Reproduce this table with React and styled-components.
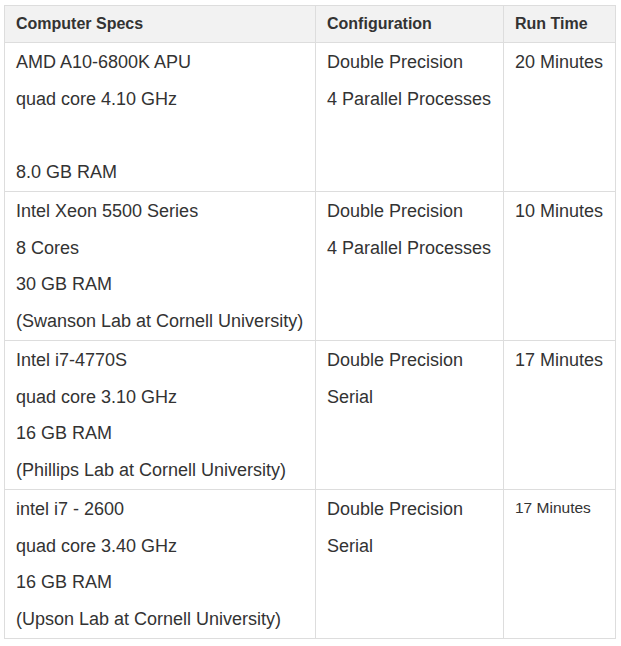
import React from 'react';
import styled, { createGlobalStyle } from 'styled-components';

const GlobalStyle = createGlobalStyle`
  body {
    margin: 0;
    background: #fff;
    font-family: "Liberation Sans", Arial, sans-serif;
    color: #333;
  }
`;

const Wrapper = styled.div`
  padding: 5px 5px 0 4px;
`;

const Table = styled.table`
  border-collapse: collapse;
  width: 611px;
  table-layout: fixed;
`;

const Col = styled.col`
  width: ${(p) => p.$w}px;
`;

const HeadCell = styled.th`
  background: #f2f2f2;
  border: 1px solid #ddd;
  font-size: 16px;
  font-weight: bold;
  text-align: left;
  height: 36px;
  padding: 0 11px;
  color: #333;
`;

const Cell = styled.td`
  border: 1px solid #ddd;
  vertical-align: top;
  padding: 1px 11px 1px;
  font-size: 18px;
`;

const Line = styled.div`
  min-height: 36.5px;
  white-space: nowrap;
  font-size: ${(p) => (p.$small ? '15.5px' : 'inherit')};
  line-height: ${(p) => (p.$small ? '33px' : '36.5px')};
`;

const rows = [
  {
    specs: ['AMD A10-6800K APU', 'quad core 4.10 GHz', '', '8.0 GB RAM'],
    config: ['Double Precision', '4 Parallel Processes'],
    time: '20 Minutes',
  },
  {
    specs: ['Intel Xeon 5500 Series', '8 Cores', '30 GB RAM', '(Swanson Lab at Cornell University)'],
    config: ['Double Precision', '4 Parallel Processes'],
    time: '10 Minutes',
  },
  {
    specs: ['Intel i7-4770S', 'quad core 3.10 GHz', '16 GB RAM', '(Phillips Lab at Cornell University)'],
    config: ['Double Precision', 'Serial'],
    time: '17 Minutes',
  },
  {
    specs: ['intel i7 - 2600', 'quad core 3.40 GHz', '16 GB RAM', '(Upson Lab at Cornell University)'],
    config: ['Double Precision', 'Serial'],
    time: '17 Minutes',
    small: true,
  },
];

export default function App() {
  return (
    <Wrapper>
      <GlobalStyle />
      <Table>
        <colgroup>
          <Col $w={311} />
          <Col $w={188} />
          <Col $w={112} />
        </colgroup>
        <thead>
          <tr>
            <HeadCell>Computer Specs</HeadCell>
            <HeadCell>Configuration</HeadCell>
            <HeadCell>Run Time</HeadCell>
          </tr>
        </thead>
        <tbody>
          {rows.map((r, i) => (
            <tr key={i}>
              <Cell>
                {r.specs.map((s, j) => (
                  <Line key={j}>{s}</Line>
                ))}
              </Cell>
              <Cell>
                {r.config.map((s, j) => (
                  <Line key={j}>{s}</Line>
                ))}
              </Cell>
              <Cell>
                <Line $small={r.small}>{r.time}</Line>
              </Cell>
            </tr>
          ))}
        </tbody>
      </Table>
    </Wrapper>
  );
}
